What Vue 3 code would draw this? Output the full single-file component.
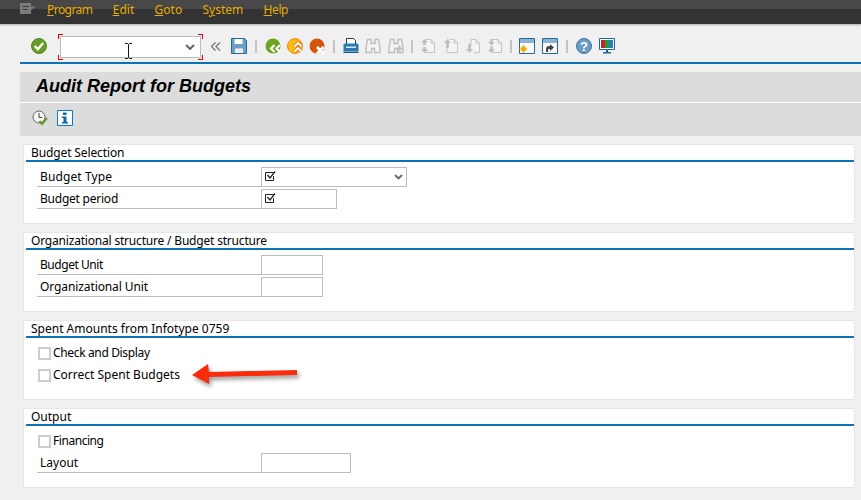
<script setup>
const groups = [
  { title: 'Budget Selection', ls: -0.12, rows: [
    { type: 'field', label: 'Budget Type', ls: 0.1, width: 146, check: true, combo: true },
    { type: 'field', label: 'Budget period', ls: -0.23, width: 76, check: true },
  ] },
  { title: 'Organizational structure / Budget structure', ls: -0.19, rows: [
    { type: 'field', label: 'Budget Unit', ls: -0.45, width: 62 },
    { type: 'field', label: 'Organizational Unit', ls: -0.1, width: 62 },
  ] },
  { title: 'Spent Amounts from Infotype 0759', ls: 0, arrow: true, rows: [
    { type: 'box', label: 'Check and Display', ls: -0.35 },
    { type: 'box', label: 'Correct Spent Budgets', ls: 0 },
  ] },
  { title: 'Output', ls: 0, rows: [
    { type: 'box', label: 'Financing', ls: -0.45 },
    { type: 'field', label: 'Layout', ls: 0, width: 90 },
  ] },
]
</script>

<template>
  <div class="page">
    <header class="menubar">
      <svg class="menu-icon" width="16" height="11" viewBox="0 0 16 11"><path d="M0 0h11v3.500H16l-5 3.500v4H0z" fill="#7c7c7c"/><path d="M2.500 3h6.500v1H2.500zM2.500 6h5v1h-5z" fill="#3c3c3c"/></svg>
      <span class="menu program"><u>P</u>rogram</span>
      <span class="menu"><u>E</u>dit</span>
      <span class="menu"><u>G</u>oto</span>
      <span class="menu">S<u>y</u>stem</span>
      <span class="menu help-item"><u>H</u>elp</span>
    </header>

    <div class="toolbar">
      <span class="slot first">
        <svg width="16" height="16" viewBox="0 0 16 16"><circle cx="8" cy="8" r="7.500" fill="#669e25" stroke="#4f8420"/><path d="M3.800 8l3 3.200 5.400-6.200" fill="none" stroke="#fff" stroke-width="2.400"/></svg>
      </span>
      <div class="command">
        <span class="chev-wrap"><svg width="10" height="6" viewBox="0 0 10 6"><path d="M1 1l4 4 4-4" fill="none" stroke="#666" stroke-width="2"/></svg></span>
        <svg class="ibeam" width="9" height="16" viewBox="0 0 9 16"><path d="M1 .5h2.500l1 1 1-1H8M1 15.500h2.500l1-1 1 1H8M4.500 1.500v13" fill="none" stroke="#111" stroke-width="1"/></svg>
        <i class="br tl"></i><i class="br tr"></i><i class="br bl"></i><i class="br br2"></i>
      </div>
      <span class="slot back">
        <svg width="10" height="9" viewBox="0 0 10 9"><path d="M4.500 .5l-4 4 4 4M9 .5l-4 4 4 4" fill="none" stroke="#777" stroke-width="1.300"/></svg>
      </span>
      <span class="slot">
        <svg width="16" height="16" viewBox="0 0 16 16"><path d="M.5.5h13l2 2v13H.5z" fill="#6f9fc6" stroke="#1f6a9e"/><path d="M3.500 1h8v5h-8z" fill="#fff"/><path d="M4 10.500h8V15H4z" fill="#f2f2f2"/></svg>
      </span>
      <i class="sep"></i>
      <span class="slot">
        <svg width="16" height="16" viewBox="0 0 16 16"><circle cx="8" cy="8" r="7.500" fill="#6aa51f"/><path d="M9.500 7l-3.500 3.500L9.500 14M15 7l-3.500 3.500L15 14" fill="none" stroke="#fff" stroke-width="2.200"/></svg>
      </span>
      <span class="slot">
        <svg width="16" height="16" viewBox="0 0 16 16"><circle cx="8" cy="8" r="7.500" fill="#fdbb10" stroke="#ee8a10"/><path d="M7.500 8.500L11 5l3.500 3.500M7.500 13.500L11 10l3.500 3.500" fill="none" stroke="#e9741c" stroke-width="3.600"/><path d="M7.500 8.500L11 5l3.500 3.500M7.500 13.500L11 10l3.500 3.500" fill="none" stroke="#fff" stroke-width="1.800"/></svg>
      </span>
      <span class="slot">
        <svg width="16" height="16" viewBox="0 0 16 16"><circle cx="8" cy="8" r="7.500" fill="#d4550c"/><path d="M8 9l6.500 6.500M14.500 9L8 15.500" stroke="#fff" stroke-width="2.800"/></svg>
      </span>
      <i class="sep"></i>
      <span class="slot">
        <svg width="16" height="16" viewBox="0 0 16 16"><path d="M3.500.5h7l2 2v4h-9z" fill="#fff" stroke="#333"/><path d="M.5 7q0-1.500 1.500-1.500h12q1.500 0 1.500 1.500v6H.5z" fill="#2a7cb3"/><path d="M3 8.500h10v1.500H3z" fill="#dbe9f3"/><path d="M.5 13.500h15V15H.5z" fill="#11598d"/></svg>
      </span>
      <span class="slot">
        <svg width="16" height="16" viewBox="0 0 16 16"><path d="M2.500 1.500h3.500v4h4v-4h3.500l1.500 9v4h-5.500v-4h-3v4H1v-4z" fill="#f4f4f4" stroke="#bdbdbd" stroke-width="1.400"/></svg>
      </span>
      <span class="slot tight">
        <svg width="16" height="16" viewBox="0 0 16 16"><path d="M2.500 1.500h3.500v4h4v-4h3.500l1.500 9v4h-5.500v-4h-3v4H1v-4z" fill="#f4f4f4" stroke="#bdbdbd" stroke-width="1.400"/><path d="M11.500 7.500v6M8.500 10.500h6" stroke="#bdbdbd" stroke-width="2"/></svg>
      </span>
      <i class="sep narrow"></i>
      <span class="slot">
        <svg width="16" height="16" viewBox="0 0 16 16"><path d="M6 1.500h5l3.500 3.500v9.500H6" fill="#f4f4f4" stroke="#c4c4c4"/><path d="M11 1.500V5h3.500" fill="none" stroke="#c4c4c4"/><path d="M4.500 1L1 4.500h2.200v2.500h2.600V4.500H8zM4.500 15L1 11.500h2.200V9h2.600v2.500H8z" fill="#bdbdbd"/></svg>
      </span>
      <span class="slot tight">
        <svg width="16" height="16" viewBox="0 0 16 16"><path d="M6 1.500h5l3.500 3.500v9.500H4V8" fill="#f4f4f4" stroke="#c4c4c4"/><path d="M11 1.500V5h3.500" fill="none" stroke="#c4c4c4"/><path d="M4.500 1L1 5h2.200v5h2.600V5H8z" fill="#bdbdbd"/></svg>
      </span>
      <span class="slot">
        <svg width="16" height="16" viewBox="0 0 16 16"><path d="M6 8V1.500h5L14.500 5v9.500H9" fill="#f4f4f4" stroke="#c4c4c4"/><path d="M11 1.500V5h3.500" fill="none" stroke="#c4c4c4"/><path d="M4.500 15L1 11h2.200V6h2.600v5H8z" fill="#bdbdbd"/></svg>
      </span>
      <span class="slot">
        <svg width="16" height="16" viewBox="0 0 16 16"><path d="M6 1.500h5l3.500 3.500v9.500H6" fill="#f4f4f4" stroke="#c4c4c4"/><path d="M11 1.500V5h3.500" fill="none" stroke="#c4c4c4"/><path d="M3.300 1v3H1l3.500 3.500L8 4H5.700V1zM3.300 8.500v3H1L4.500 15 8 11.500H5.700v-3z" fill="#bdbdbd"/></svg>
      </span>
      <i class="sep narrow"></i>
      <span class="slot">
        <svg width="16" height="16" viewBox="0 0 16 16"><path d="M.5.500h15v15H.5z" fill="#fff" stroke="#1f6a9e"/><path d="M1 1h14v4H1z" fill="#8db2d4"/><circle cx="4.500" cy="11" r="2.500" fill="#f7a600"/><path d="M4.500 7v8M.5 11h8M2 8.500l5 5M7 8.500l-5 5" stroke="#f7a600"/></svg>
      </span>
      <span class="slot tight">
        <svg width="16" height="16" viewBox="0 0 16 16"><path d="M.5.500h15v15H.5z" fill="#fff" stroke="#1f6a9e"/><path d="M1 1h14v4H1z" fill="#8db2d4"/><path d="M4 14v-3q0-3 3-3h1V6l4 3.500-4 3.500v-2H7q-1 0-1 1v2z" fill="#444"/></svg>
      </span>
      <i class="sep"></i>
      <span class="slot">
        <svg width="16" height="16" viewBox="0 0 16 16"><circle cx="8" cy="8" r="7.500" fill="#6d9cc4" stroke="#3a76a6"/><text x="8" y="12.500" text-anchor="middle" class="help">?</text></svg>
      </span>
      <span class="slot tight">
        <svg width="16" height="16" viewBox="0 0 16 16"><path d="M.5.500h15v11H.5z" fill="#fff" stroke="#176a9e"/><path d="M2 2h4v8H2z" fill="#c8232c"/><path d="M6 2h4v8H6z" fill="#2d9a2d"/><path d="M10 2h4v8h-4z" fill="#2b7cc4"/><path d="M7 12h2v2H7zM4 14h8v1.500H4z" fill="#176a9e"/></svg>
      </span>
    </div>

    <main class="content">
      <div class="title-band"><h1>Audit Report for Budgets</h1></div>
      <div class="actions">
        <svg width="16" height="16" viewBox="0 0 16 16"><circle cx="7" cy="7" r="6" fill="#f6f6f6" stroke="#666"/><path d="M7 3v4.500h3" fill="none" stroke="#444"/><path d="M7.500 11l2.500 3 5-6" fill="none" stroke="#5d9a24" stroke-width="2"/></svg>
        <svg width="16" height="16" viewBox="0 0 16 16"><path d="M.5.500h15v15H.5z" fill="#fff" stroke="#0a7ac2"/><path d="M6 2.500h3.500v2.500H6zM5 6.500h4.500V12H11v1.500H5V12h1.500V8H5z" fill="#10699e"/></svg>
      </div>

      <section v-for="g in groups" :key="g.title" class="group">
        <h2 :style="{ letterSpacing: g.ls + 'px' }">{{ g.title }}</h2>
        <div class="rows">
          <div v-for="r in g.rows" :key="r.label" class="row" :class="r.type">
            <template v-if="r.type === 'box'">
              <i class="check"></i><span class="box-text" :style="{ letterSpacing: r.ls + 'px' }">{{ r.label }}</span>
            </template>
            <template v-else>
              <span class="label" :style="{ letterSpacing: r.ls + 'px' }">{{ r.label }}</span>
              <span class="input" :style="{ width: r.width + 'px' }">
                <svg v-if="r.check" width="12" height="12" viewBox="0 0 12 12"><path d="M9.500 6v4.500h-8v-8h8" fill="none" stroke="#222"/><path d="M3.500 5l2.500 3 5-6.500" fill="none" stroke="#222" stroke-width="1.300"/></svg>
                <svg v-if="r.combo" class="combo" width="9" height="6" viewBox="0 0 9 6"><path d="M1 1l3.500 3.500L8 1" fill="none" stroke="#666" stroke-width="1.800"/></svg>
              </span>
            </template>
          </div>
        </div>
        <svg v-if="g.arrow" class="arrow" width="106" height="24" viewBox="0 0 106 24"><path d="M0 13L16 2l1 8 88-2v5l-88 2v7z" fill="#fb2c0c"/></svg>
      </section>
    </main>
  </div>
</template>

<style scoped>
.page { width: 861px; height: 500px; overflow: hidden; background: #f0f0f0; color: #000; font-family: "Noto Sans", sans-serif; font-size: 12px; }
.menubar { height: 24px; box-sizing: border-box; display: flex; align-items: flex-start; padding: 2px 0 0 20px; background: linear-gradient(#484848 0 9px, #333 9px); box-shadow: 0 1px 2px #aaa; }
.menu-icon { margin: 1px 11px 0 0; }
.menu { color: #e8ad00; font-size: 12px; line-height: 15px; margin-right: 20.3px; }
.program { letter-spacing: -.55px; }
.help-item { letter-spacing: -.4px; }
.toolbar { height: 40px; margin-left: 20px; box-sizing: border-box; border-bottom: 2px solid #0a72b5; display: flex; align-items: center; padding: 12px 0 4px; }
.slot { width: 22px; height: 16px; display: flex; align-items: center; justify-content: center; flex: none; margin-bottom: 2px; }
.slot.first { margin-right: 10px; margin-left: 8px; }
.slot.back { width: 27px; box-sizing: border-box; padding-left: 3px; }
.slot.tight { margin-left: 1px; }
.sep { width: 2px; height: 13px; background: #c4c4c4; margin: 0 5px 2px; flex: none; }
.sep.narrow { margin: 0 4px 2px; }
.command { position: relative; width: 141px; height: 22px; box-sizing: border-box; background: #fff; border: 1px solid #bcbcbc; flex: none; display: flex; align-items: center; justify-content: flex-end; padding-right: 5px; }
.chev-wrap { display: flex; }
.ibeam { position: absolute; left: 63px; top: 6px; }
.br { position: absolute; width: 4px; height: 4px; border: 0 solid #e3000f; }
.tl { left: -3px; top: -3px; border-width: 1px 0 0 1px; }
.tr { right: -3px; top: -3px; border-width: 1px 1px 0 0; }
.bl { left: -3px; bottom: -3px; border-width: 0 0 1px 1px; }
.br2 { right: -3px; bottom: -3px; border-width: 0 1px 1px 0; }
.content { margin: 8px 0 0 20px; }
.title-band { height: 30px; background: #dcdcdc; display: flex; align-items: center; padding: 0 0 2px 16px; box-sizing: border-box; }
h1 { margin: 0; font-family: "Liberation Sans", sans-serif; font-size: 18px; font-style: italic; font-weight: 700; }
.actions { height: 34px; border-top: 1px solid #fff; background: #dcdcdc; display: flex; align-items: center; gap: 9px; padding: 0 0 4px 12px; box-sizing: border-box; }
.group { position: relative; width: 832px; height: 80px; margin: 8px 0 0 3px; box-sizing: border-box; background: #fff; border: 1px solid #e6e6e6; padding: 0 0 0 2px; }
h2 { margin: 0; height: 15px; font-size: 12px; font-weight: 400; line-height: 15px; padding-left: 5px; border-bottom: 2px solid #0a72b5; box-sizing: content-box; }
.rows { padding: 5px 0 0 11px; display: flex; flex-direction: column; gap: 2px; }
.row { height: 20px; display: flex; align-items: center; }
.label { width: 224px; height: 20px; line-height: 20px; padding-left: 3px; box-sizing: border-box; border-bottom: 1px solid #bcbcbc; flex: none; }
.input { height: 20px; box-sizing: border-box; border: 1px solid #bcbcbc; background: #fff; display: flex; align-items: center; justify-content: space-between; padding: 0 3px 2px 2px; }
.combo { margin-top: 2px; }
.check { width: 13px; height: 13px; box-sizing: border-box; border: 2px solid #cdcdcd; margin: 0 2px 0 1px; flex: none; background: #fff; }
.box-text { line-height: 16px; margin-top: -1px; }
.arrow { position: absolute; left: 168px; top: 41px; overflow: visible; filter: drop-shadow(2px 3px 2px rgba(0,0,0,.4)); }
.help { fill: #fff; font: 700 13px "Liberation Sans", sans-serif; }
</style>
